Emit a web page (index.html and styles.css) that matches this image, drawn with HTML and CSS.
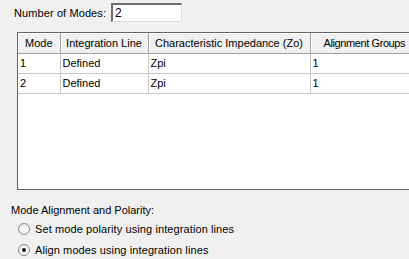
FILE: index.html
```html
<!DOCTYPE html>
<html>
<head>
<meta charset="utf-8">
<link rel="stylesheet" href="styles.css">
</head>
<body>
<div class="page">
  <div class="modes-row">
    <span class="label">Number of Modes:</span>
    <div class="input">2</div>
  </div>
  <div class="grid-box">
    <table class="grid">
      <colgroup>
        <col class="c1"><col class="c2"><col class="c3"><col class="c4">
      </colgroup>
      <thead>
        <tr>
          <th>Mode</th>
          <th>Integration Line</th>
          <th>Characteristic Impedance (Zo)</th>
          <th class="left">Alignment Groups</th>
        </tr>
      </thead>
      <tbody>
        <tr><td>1</td><td>Defined</td><td>Zpi</td><td>1</td></tr>
        <tr><td>2</td><td>Defined</td><td>Zpi</td><td>1</td></tr>
      </tbody>
    </table>
  </div>
  <div class="section">
    <div class="section-title">Mode Alignment and Polarity:</div>
    <div class="radio-row"><span class="radio"></span><span>Set mode polarity using integration lines</span></div>
    <div class="radio-row second"><span class="radio checked"></span><span>Align modes using integration lines</span></div>
  </div>
</div>
</body>
</html>
```

FILE: styles.css
```css
html, body {
  margin: 0;
  padding: 0;
  background: #f0f0f0;
  overflow: hidden;
}
.page {
  width: 409px;
  height: 259px;
  font-family: "Liberation Sans", Arial, sans-serif;
  font-size: 11px;
  color: #000;
  overflow: hidden;
}
.modes-row {
  display: flex;
  align-items: center;
  padding: 3px 0 0 14px;
  height: 19px;
}
.label {
  width: 97px;
  letter-spacing: 0.1px;
}
.input {
  box-sizing: border-box;
  width: 71px;
  height: 19px;
  background: #fff;
  border-top: 2px solid #6d6d6d;
  border-left: 2px solid #6d6d6d;
  border-right: 1px solid #dcdcdc;
  border-bottom: 1px solid #dcdcdc;
  padding: 1px 0 0 2px;
  font-size: 12px;
  line-height: 14px;
}
.grid-box {
  box-sizing: border-box;
  margin: 10px 0 0 17px;
  width: 430px;
  height: 158px;
  background: #fff;
  border: 1px solid #646464;
  border-right: none;
}
.grid {
  border-collapse: collapse;
  table-layout: fixed;
  width: 403px;
}
.c1 { width: 42px; }
.c2 { width: 88px; }
.c3 { width: 162px; }
.c4 { width: 111px; }
.grid th {
  height: 20px;
  padding: 0;
  box-sizing: border-box;
  background: #f0f0f0;
  font-weight: normal;
  text-align: center;
  border-right: 1px solid #a0a0a0;
  border-bottom: 1px solid #a0a0a0;
  box-shadow: inset 1px 1px 0 #fff;
  white-space: nowrap;
  overflow: hidden;
}
.grid th.left {
  text-align: left;
  padding-left: 13px;
  letter-spacing: -0.4px;
}
.grid td {
  height: 20px;
  padding: 0 0 0 2px;
  box-sizing: border-box;
  border-right: 1px solid #c8c8c8;
  border-bottom: 1px solid #c8c8c8;
  white-space: nowrap;
}
.section {
  padding: 13px 0 0 11px;
}
.section-title {
  height: 15px;
  line-height: 15px;
}
.radio-row {
  display: flex;
  align-items: center;
  gap: 5px;
  padding-left: 7px;
  height: 17px;
  margin-top: 2px;
  letter-spacing: 0.1px;
}
.radio-row.second {
  margin-top: 4px;
}
.radio {
  box-sizing: border-box;
  width: 12px;
  height: 12px;
  border-radius: 50%;
  border: 1px solid #8a8a8a;
  background: radial-gradient(circle at 60% 60%, #ffffff 0%, #f4f4f4 50%, #d8d8d8 100%);
  position: relative;
  flex: none;
}
.radio.checked::after {
  content: "";
  position: absolute;
  left: 3px;
  top: 3px;
  width: 4px;
  height: 4px;
  border-radius: 50%;
  background: #1a1a1a;
}
```
